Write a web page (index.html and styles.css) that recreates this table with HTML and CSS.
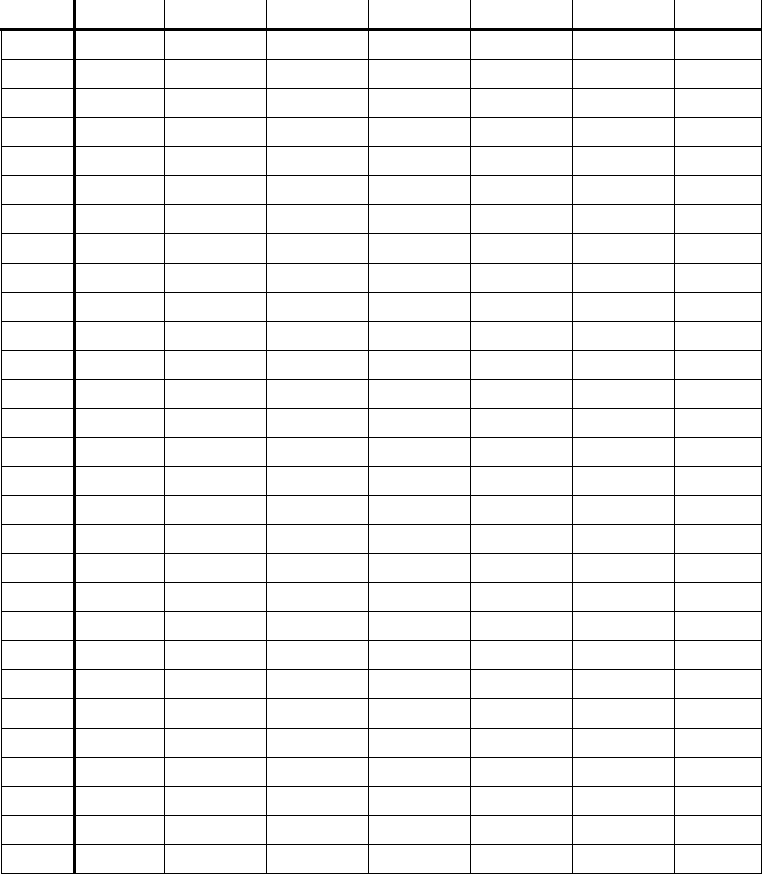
FILE: index.html
```html
<!DOCTYPE html>
<html>
<head>
<meta charset="utf-8">
<link rel="stylesheet" href="styles.css">
</head>
<body>
<div class="sheet">
  <div class="row head">
    <div class="cell first"></div><div class="cell key"></div><div class="cell"></div><div class="cell"></div><div class="cell"></div><div class="cell"></div><div class="cell"></div><div class="cell last"></div>
  </div>
  <div class="body" id="body"></div>
</div>
<script>
  var body = document.getElementById('body');
  var rowHtml = '<div class="row"><div class="cell first"></div><div class="cell key"></div><div class="cell"></div><div class="cell"></div><div class="cell"></div><div class="cell"></div><div class="cell"></div><div class="cell last"></div></div>';
  var html = '';
  for (var i = 0; i < 29; i++) html += rowHtml;
  body.innerHTML = html;
</script>
</body>
</html>
```

FILE: styles.css
```css
html, body {
  margin: 0;
  padding: 0;
  background: #ffffff;
}

.sheet {
  margin-left: 1px;
  width: 761px;
}

.row {
  display: grid;
  grid-template-columns: 72px 91px 102px 102px 102px 102px 102px 88px;
  box-sizing: border-box;
  height: calc(843px / 29);
  border-bottom: 1px solid #000;
}

.row.head {
  height: 28px;
  border-bottom: none;
}

.body {
  border-top: 3px solid #000;
  margin-left: -1px;
  padding-left: 1px;
}

.cell {
  box-sizing: border-box;
  border-left: 1px solid #000;
}

.cell.key {
  border-left: 3px solid #000;
}

.cell.last {
  border-right: 1px solid #000;
}

.head .cell.first {
  border-left: none;
}
```
